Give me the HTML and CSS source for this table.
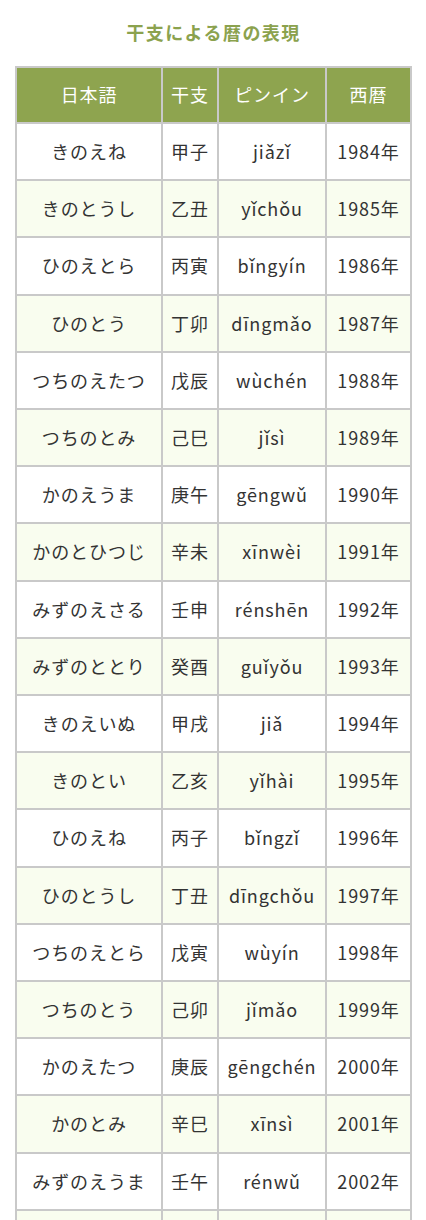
FILE: index.html
```html
<!DOCTYPE html>
<html lang="ja">
<head>
<meta charset="utf-8">
<link rel="stylesheet" href="styles.css">
</head>
<body>
<div class="page">
  <h2 class="title">干支による暦の表現</h2>
  <table class="eto">
    <colgroup>
      <col class="c1"><col class="c2"><col class="c3"><col class="c4">
    </colgroup>
    <thead>
      <tr><th>日本語</th><th>干支</th><th>ピンイン</th><th>西暦</th></tr>
    </thead>
    <tbody>
      <tr><td>きのえね</td><td>甲子</td><td>jiǎzǐ</td><td>1984年</td></tr>
      <tr><td>きのとうし</td><td>乙丑</td><td>yǐchǒu</td><td>1985年</td></tr>
      <tr><td>ひのえとら</td><td>丙寅</td><td>bǐngyín</td><td>1986年</td></tr>
      <tr><td>ひのとう</td><td>丁卯</td><td>dīngmǎo</td><td>1987年</td></tr>
      <tr><td>つちのえたつ</td><td>戊辰</td><td>wùchén</td><td>1988年</td></tr>
      <tr><td>つちのとみ</td><td>己巳</td><td>jǐsì</td><td>1989年</td></tr>
      <tr><td>かのえうま</td><td>庚午</td><td>gēngwǔ</td><td>1990年</td></tr>
      <tr><td>かのとひつじ</td><td>辛未</td><td>xīnwèi</td><td>1991年</td></tr>
      <tr><td>みずのえさる</td><td>壬申</td><td>rénshēn</td><td>1992年</td></tr>
      <tr><td>みずのととり</td><td>癸酉</td><td>guǐyǒu</td><td>1993年</td></tr>
      <tr><td>きのえいぬ</td><td>甲戌</td><td>jiǎ</td><td>1994年</td></tr>
      <tr><td>きのとい</td><td>乙亥</td><td>yǐhài</td><td>1995年</td></tr>
      <tr><td>ひのえね</td><td>丙子</td><td>bǐngzǐ</td><td>1996年</td></tr>
      <tr><td>ひのとうし</td><td>丁丑</td><td>dīngchǒu</td><td>1997年</td></tr>
      <tr><td>つちのえとら</td><td>戊寅</td><td>wùyín</td><td>1998年</td></tr>
      <tr><td>つちのとう</td><td>己卯</td><td>jǐmǎo</td><td>1999年</td></tr>
      <tr><td>かのえたつ</td><td>庚辰</td><td>gēngchén</td><td>2000年</td></tr>
      <tr><td>かのとみ</td><td>辛巳</td><td>xīnsì</td><td>2001年</td></tr>
      <tr><td>みずのえうま</td><td>壬午</td><td>rénwǔ</td><td>2002年</td></tr>
      <tr class="tail"><td></td><td></td><td></td><td></td></tr>
    </tbody>
  </table>
</div>
</body>
</html>
```

FILE: styles.css
```css
html, body {
  margin: 0;
  padding: 0;
  background: #ffffff;
}
.page {
  padding: 0 14px 0 15px;
  font-family: "Noto Sans CJK JP", "Noto Sans", sans-serif;
  color: #333333;
}
.title {
  margin: 0;
  padding: 19px 0 0;
  height: 66px;
  box-sizing: border-box;
  font-size: 18px;
  line-height: 26px;
  font-weight: bold;
  text-align: center;
  color: #8ba24e;
  letter-spacing: 0.08em;
}
.eto {
  width: 397px;
  border-collapse: collapse;
  table-layout: fixed;
  font-size: 18px;
  letter-spacing: 0.05em;
}
.c1 { width: 146px; }
.c2 { width: 56px; }
.c3 { width: 108px; }
.c4 { width: 85px; }
.eto th,
.eto td {
  border: 2px solid #c9c9c9;
  text-align: center;
  padding: 14px 0;
  line-height: 27.2px;
  white-space: nowrap;
}
.eto th {
  background: #8ea44f;
  color: #ffffff;
  font-weight: normal;
  padding: 13px 0 13.8px;
}
.eto tbody tr:nth-child(even) td {
  background: #f9fdef;
}
.eto .tail td {
  height: 10px;
  padding: 0;
  border-bottom: 0;
}
```
